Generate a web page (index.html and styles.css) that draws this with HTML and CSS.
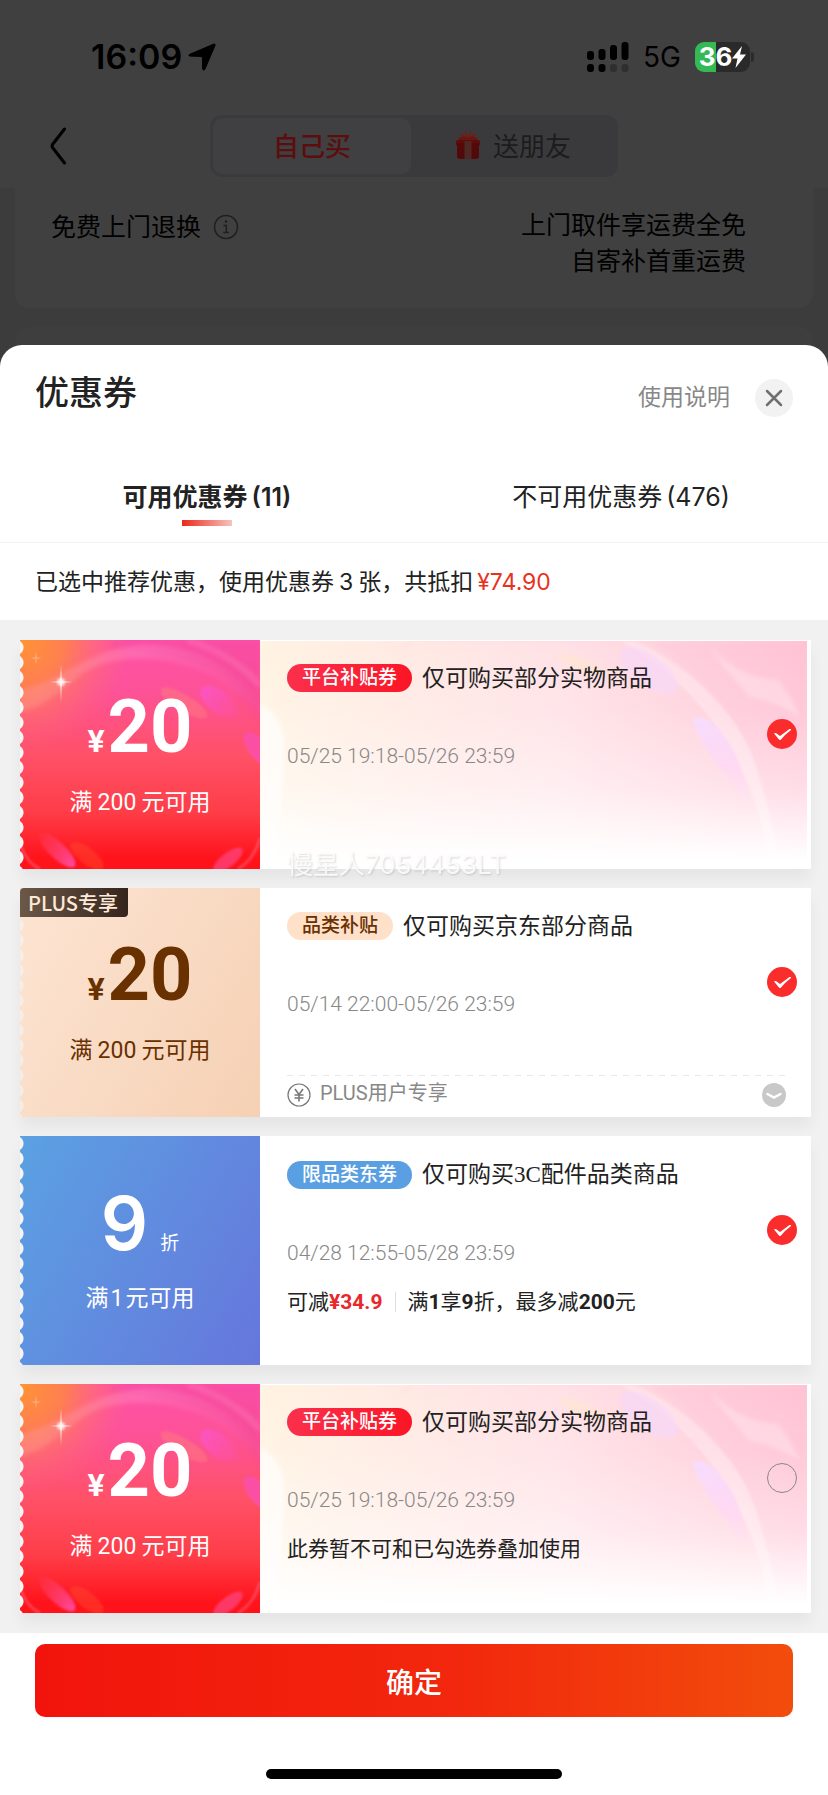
FILE: index.html
```html
<!DOCTYPE html>
<html lang="zh-CN">
<head>
<meta charset="utf-8">
<meta name="viewport" content="width=device-width, initial-scale=1">
<title>优惠券</title>
<link rel="stylesheet" href="styles.css">
</head>
<body>
<svg class="defs" aria-hidden="true">
  <defs>
    <linearGradient id="stub-base" x1="0" y1="0" x2="0" y2="1">
      <stop offset="0" stop-color="#ff52a8"/><stop offset=".22" stop-color="#fd5298"/><stop offset=".5" stop-color="#ff5168"/><stop offset=".75" stop-color="#fe3d48"/><stop offset=".95" stop-color="#ff141c"/><stop offset="1" stop-color="#ff1219"/>
    </linearGradient>
    <radialGradient id="stub-sun" gradientUnits="userSpaceOnUse" cx="0" cy="0" r="110">
      <stop offset="0" stop-color="#ff9433"/><stop offset=".4" stop-color="#ff8547" stop-opacity=".9"/><stop offset="1" stop-color="#ff6c78" stop-opacity="0"/>
    </radialGradient>
    <linearGradient id="petal" x1="0" y1="0" x2="1" y2="0">
      <stop offset="0" stop-color="#fb55c4"/><stop offset="1" stop-color="#ff4f9c" stop-opacity=".5"/>
    </linearGradient>
    <linearGradient id="petal-low" x1="0" y1="0" x2="1" y2="0">
      <stop offset="0" stop-color="#ff4f80" stop-opacity=".1"/><stop offset="1" stop-color="#ff4aa0"/>
    </linearGradient>
    <linearGradient id="ring" x1="0" y1="0" x2="1" y2="0">
      <stop offset="0" stop-color="#ffa88c" stop-opacity=".35"/><stop offset=".5" stop-color="#ff86c0" stop-opacity=".45"/><stop offset="1" stop-color="#ff6cb4" stop-opacity=".1"/>
    </linearGradient>
    <linearGradient id="body-base" x1="0" y1="0" x2="1" y2="0">
      <stop offset="0" stop-color="#fff3e2"/><stop offset=".22" stop-color="#ffebe3"/><stop offset=".55" stop-color="#ffe1e6"/><stop offset="1" stop-color="#ffc4d4"/>
    </linearGradient>
    <linearGradient id="body-fade" x1="0" y1="0" x2="0" y2="1">
      <stop offset="0" stop-color="#fff" stop-opacity="0"/><stop offset=".3" stop-color="#fff" stop-opacity=".12"/><stop offset=".65" stop-color="#fff" stop-opacity=".45"/><stop offset=".96" stop-color="#fff"/>
    </linearGradient>
    <linearGradient id="body-petal" x1="0" y1="0" x2="0" y2="1">
      <stop offset="0" stop-color="#f5d6ff"/><stop offset=".6" stop-color="#ffc4ea"/><stop offset="1" stop-color="#ffc9e6" stop-opacity=".3"/>
    </linearGradient>
    <filter id="soft" x="-20%" y="-20%" width="140%" height="140%"><feGaussianBlur stdDeviation="2"/></filter>
    <filter id="edge" x="-20%" y="-20%" width="140%" height="140%"><feGaussianBlur stdDeviation="1"/></filter>
  </defs>
  <symbol id="stub-art" viewBox="0 0 240 229" preserveAspectRatio="none">
    <rect width="240" height="229" fill="url(#stub-base)"/>
    <path d="M90 0H240V85C220 35 175 12 90 12Z" fill="#e8409c" opacity=".25" filter="url(#soft)"/>
    <rect width="240" height="229" fill="url(#stub-sun)"/>
    <path d="M0 72C28 66 42 48 62 34C92 14 140 14 180 30C208 42 228 58 240 76V64C214 26 170 2 120 5C70 8 44 40 0 50Z" fill="url(#ring)" filter="url(#soft)"/>
    <path d="M168 0C204 12 228 30 240 46" fill="none" stroke="#ff83bd" stroke-width="6" opacity=".35" filter="url(#soft)"/>
    <ellipse cx="164" cy="63" rx="27" ry="8" transform="rotate(31 164 63)" fill="#ff7b80" opacity=".5" filter="url(#edge)"/>
    <ellipse cx="199" cy="62" rx="22" ry="11" transform="rotate(38 199 62)" fill="url(#petal)" filter="url(#edge)"/>
    <ellipse cx="237" cy="108" rx="19" ry="9" transform="rotate(55 237 108)" fill="#fb4fae" opacity=".85" filter="url(#edge)"/>
    <ellipse cx="37" cy="210" rx="24" ry="8" transform="rotate(43 37 210)" fill="url(#petal-low)" filter="url(#edge)"/>
    <ellipse cx="67" cy="216" rx="20" ry="8" transform="rotate(38 67 216)" fill="#ff5a35" opacity=".35" filter="url(#edge)"/>
    <ellipse cx="208" cy="220" rx="18" ry="7" transform="rotate(-38 208 220)" fill="#ff4b8c" opacity=".65" filter="url(#edge)"/>
    <path d="M0 205Q8 224 20 229M240 198Q234 220 218 229" fill="none" stroke="#ff718c" stroke-width="3" opacity=".45" filter="url(#edge)"/>
    <path d="M41 24L42 41L53 42L42 43L41 62L40 43L30 42L40 41Z" fill="#ffe6d8" opacity=".8"/>
    <circle cx="41" cy="42" r="4" fill="#fff" opacity=".75" filter="url(#edge)"/>
    <path d="M16 11L17 17L22 18L17 19L16 25L15 19L10 18L15 17Z" fill="#ffc59c" opacity=".5"/>
  </symbol>
  <symbol id="body-art" viewBox="0 0 547 229" preserveAspectRatio="none">
    <rect width="547" height="229" fill="url(#body-base)"/>
    <path d="M125 22C150 0 180 -20 270 -8H370C440 20 500 100 520 229H547V0H150Z" fill="#ffbcd6" opacity=".25" filter="url(#soft)"/>
    <path d="M445 0C470 30 500 40 516 38Q530 52 540 76Q515 60 490 56Q466 30 445 0Z" fill="#fff" opacity=".25" filter="url(#soft)"/>
    <path d="M375 0C438 30 478 76 494 120C502 145 514 185 520 229H510C504 170 470 60 360 0Z" fill="#ffeaf1" opacity=".5" filter="url(#edge)"/>
    <path d="M296 12C320 14 342 24 350 34C326 36 306 26 296 12Z" fill="#ffe8c4" opacity=".45" filter="url(#soft)"/>
    <ellipse cx="389" cy="30" rx="34" ry="15" transform="rotate(36 389 30)" fill="#f7d6fb" opacity=".65" filter="url(#edge)"/>
    <path d="M433 79C441 70 464 88 476 116C484 136 492 158 486 164C474 146 436 100 433 79Z" fill="url(#body-petal)" filter="url(#edge)"/>
    <path d="M0 64C18 68 27 92 24 118L16 229H0Z" fill="#fff" opacity=".65" filter="url(#soft)"/>
    <rect width="547" height="229" fill="url(#body-fade)"/>
  </symbol>
  <symbol id="tick" viewBox="0 0 30 30">
    <path d="M7 14.500Q8.500 13.500 10 14.800L13 17L22.500 10Q24.500 9.500 24 11Q18 15.500 14 20.500Q13 21.500 12 20.500Q9.500 17.500 7 14.500Z" fill="#fff"/>
  </symbol>
</svg>

<div class="screen">
  <div class="backdrop">
    <header class="status">
      <div class="status-time">
        <span>16:09</span>
        <svg width="28" height="28" viewBox="0 0 28 28"><path d="M25.500 1.200Q27.500 .2 27 2.500L17 26Q15.600 28.500 14.500 25.800V15Q14.500 13.500 13 13.400L2 13.100Q-.5 12.500 2 11.200Z" stroke="#000" stroke-linejoin="round"/></svg>
      </div>
      <div class="status-right">
        <svg width="42" height="30" viewBox="0 0 42 30">
          <rect x="0" y="9" width="7" height="9" rx="3"/><rect x="11.500" y="7" width="7" height="11" rx="3"/><rect x="23" y="3" width="7" height="15" rx="3"/><rect x="34.500" y="0" width="7" height="18" rx="3"/>
          <rect x="0" y="22" width="7" height="8" rx="3"/><rect x="11.500" y="22" width="7" height="8" rx="3"/><rect x="23" y="22" width="7" height="8" rx="3" fill="#2f2f2f"/><rect x="34.500" y="22" width="7" height="8" rx="3" fill="#2f2f2f"/>
        </svg>
        <span class="network">5G</span>
        <div class="battery">
          <span class="battery-level">36<svg width="14" height="22" viewBox="0 0 14 22"><path d="M10 0L0 12.500H5.500L3.500 22L14 8.500H8Z" fill="#fff"/></svg></span>
          <i class="battery-nub"></i>
        </div>
      </div>
    </header>
    <nav class="nav">
      <button class="back" aria-label="返回"><svg width="18" height="38" viewBox="0 0 18 38"><path d="M15.500 2L3.500 17.500Q2.500 19 3.500 20.500L15.500 36" fill="none" stroke="#000" stroke-width="3" stroke-linecap="round"/></svg></button>
      <div class="segment">
        <button class="segment-item is-active">自己买</button>
        <button class="segment-item">
          <svg width="26" height="28" viewBox="0 0 26 28"><path d="M13 8L5 3M13 8L10 1M13 8L16 1M13 8L21 3" stroke="#6c2018" stroke-width="2"/><path d="M4 9Q9 5 13 9Q17 5 22 9" fill="none" stroke="#6e1410" stroke-width="3"/><rect x="1" y="9" width="24" height="6" rx="2" fill="#5d0b0b"/><rect x="2" y="12" width="22" height="16" rx="3" fill="#520909"/><path d="M9.500 10H16.500V28H9.500Z" fill="#4f2a25"/></svg>
          送朋友
        </button>
      </div>
    </nav>
    <main class="page">
      <section class="service">
        <div class="service-name">免费上门退换
          <svg width="26" height="26" viewBox="0 0 26 26"><circle cx="13" cy="13" r="11.500" fill="none" stroke="#1f1f1f" stroke-width="1.500"/><circle cx="13" cy="7.500" r="1.300" fill="#1f1f1f"/><path d="M10.500 11.500H13.300V18.500M10.300 18.500H16" fill="none" stroke="#1f1f1f" stroke-width="1.500"/></svg>
        </div>
        <p class="service-text">上门取件享运费全免<br>自寄补首重运费</p>
      </section>
      <section class="service-next"></section>
    </main>
  </div>

  <div class="sheet" role="dialog" aria-labelledby="sheet-title">
    <header class="sheet-head">
      <h1 id="sheet-title">优惠券</h1>
      <div class="sheet-tools">
        <a href="#help">使用说明</a>
        <button class="close" aria-label="关闭"><svg width="18" height="18" viewBox="0 0 18 18"><path d="M2 2L16 16M16 2L2 16" stroke="#707070" stroke-width="2.500" stroke-linecap="round"/></svg></button>
      </div>
    </header>
    <div class="tabs" role="tablist">
      <button class="tab is-active" role="tab" aria-selected="true"><span class="tab-text">可用优惠券<span>(11)</span></span></button>
      <button class="tab" role="tab" aria-selected="false"><span class="tab-text">不可用优惠券<span>(476)</span></span></button>
    </div>
    <p class="summary">已选中推荐优惠，使用优惠券<span class="count">3</span>张，共抵扣<span class="price">¥74.90</span></p>

    <div class="list">
      <article class="coupon promo">
        <div class="stub">
          <svg class="art"><use href="#stub-art"/></svg>
          <div class="amount"><span class="yen">¥</span><b>20</b></div>
          <p class="rule">满<span class="count">200</span>元可用</p>
        </div>
        <div class="body">
          <svg class="art"><use href="#body-art"/></svg>
          <h2><span class="pill">平台补贴券</span>仅可购买部分实物商品</h2>
          <time>05/25 19:18-05/26 23:59</time>
        </div>
        <label class="check"><input type="checkbox" aria-label="选择平台补贴券" checked><svg><use href="#tick"/></svg></label>
        <span class="mark">慢星人7054453LT</span>
      </article>

      <article class="coupon plus">
        <div class="stub">
          <span class="plus-tag">PLUS专享</span>
          <div class="amount"><span class="yen">¥</span><b>20</b></div>
          <p class="rule">满<span class="count">200</span>元可用</p>
        </div>
        <div class="body">
          <h2><span class="pill">品类补贴</span>仅可购买京东部分商品</h2>
          <time>05/14 22:00-05/26 23:59</time>
          <div class="extra">
            <svg width="24" height="24" viewBox="0 0 24 24" fill="none" stroke="#777"><circle cx="12" cy="12" r="11" stroke-width="1.200"/><path d="M8 6L12 11.500L16 6M7.500 12H16.500M7.500 15H16.500M12 11.500V18.500" stroke-width="1.600"/></svg>
            <span>PLUS用户专享</span>
            <button class="expand" aria-label="展开"><svg width="24" height="24" viewBox="0 0 24 24"><circle cx="12" cy="12" r="12" fill="#c8c8c8"/><path d="M5.500 11L12 14.500L18.500 11" fill="none" stroke="#fff" stroke-width="2.500" stroke-linecap="round"/></svg></button>
          </div>
        </div>
        <label class="check"><input type="checkbox" aria-label="选择品类补贴" checked><svg><use href="#tick"/></svg></label>
      </article>

      <article class="coupon category">
        <div class="stub">
          <div class="amount discount"><b>9</b><span class="unit">折</span></div>
          <p class="rule">满<span class="single">1</span>元可用</p>
        </div>
        <div class="body">
          <h2><span class="pill">限品类东券</span><span>仅可购买<span class="serif">3C</span>配件品类商品</span></h2>
          <time>04/28 12:55-05/28 23:59</time>
          <p class="note"><span>可减<b class="saving">¥34.9</b></span><i class="divider"></i><span>满<b>1</b>享<b>9</b>折，最多减<b>200</b>元</span></p>
        </div>
        <label class="check"><input type="checkbox" aria-label="选择限品类东券" checked><svg><use href="#tick"/></svg></label>
      </article>

      <article class="coupon promo">
        <div class="stub">
          <svg class="art"><use href="#stub-art"/></svg>
          <div class="amount"><span class="yen">¥</span><b>20</b></div>
          <p class="rule">满<span class="count">200</span>元可用</p>
        </div>
        <div class="body">
          <svg class="art"><use href="#body-art"/></svg>
          <h2><span class="pill">平台补贴券</span>仅可购买部分实物商品</h2>
          <time>05/25 19:18-05/26 23:59</time>
          <p class="note">此券暂不可和已勾选券叠加使用</p>
        </div>
        <label class="check"><input type="checkbox" aria-label="选择第二张平台补贴券"></label>
      </article>
    </div>

    <footer class="actions">
      <button class="confirm">确定</button>
      <div class="home-bar"></div>
    </footer>
  </div>
</div>
</body>
</html>
```
FILE: styles.css
```css
* { box-sizing: border-box; }
body { margin: 0; background: #3c3c3c; color: #222; font-family: Inter, "Noto Sans CJK SC", sans-serif; }
h1, h2, p { margin: 0; }
button { border: 0; margin: 0; padding: 0; background: none; color: inherit; font: inherit; }
svg { display: block; flex: none; }
.defs { position: absolute; width: 0; height: 0; }
.screen { display: flex; flex-direction: column; min-height: 100vh; }

/* Dimmed page */
.backdrop { color: #000; }
.status { display: flex; justify-content: space-between; align-items: center; height: 112px; padding: 1px 74px 0 91px; background: #404040; }
.status-time { display: flex; align-items: center; gap: 6px; font-size: 34px; font-weight: 600; line-height: 40px; }
.status-right { display: flex; align-items: center; gap: 14px; }
.network { font-size: 28px; line-height: 32px; }
.battery { display: flex; align-items: center; gap: 1px; }
.battery-level { display: flex; align-items: center; justify-content: center; width: 55px; height: 30px; border-radius: 9px; background: linear-gradient(90deg, #34b955 21px, #2a2a2a 21px); color: #fff; font-size: 26px; font-weight: 700; line-height: 30px; }
.battery-nub { width: 3px; height: 10px; border-radius: 0 3px 3px 0; background: #2a2a2a; }
.nav { display: grid; grid-template-columns: 1fr 408px 1fr; align-items: center; height: 76px; padding-bottom: 8px; background: #404040; }
.back { justify-self: start; margin-left: 49px; }
.segment { display: grid; grid-template-columns: 198px 1fr; height: 62px; padding: 3px; border-radius: 12px; background: #3a3a3d; }
.segment-item { display: flex; align-items: center; justify-content: center; gap: 12px; padding-bottom: 3px; color: #1c1c1c; font-size: 26px; border-radius: 10px; }
.segment-item.is-active { background: #404042; color: #5c0d0d; font-weight: 500; }
.page { padding: 0 15px; }
.service { display: flex; justify-content: space-between; min-height: 120px; padding: 19px 67px 0 36px; border-radius: 0 0 14px 14px; background: #404040; font-size: 25px; line-height: 36px; }
.service-name { display: flex; align-items: center; gap: 12px; height: 40px; font-size: 25px; }
.service-text { text-align: right; }
.service-next { height: 37px; margin-top: 19px; margin-bottom: -19px; border-radius: 14px 14px 0 0; background: #3e3e3e; }

/* Sheet */
.sheet { position: relative; display: flex; flex-direction: column; flex: 1; border-radius: 22px 22px 0 0; background: #fff; }
.sheet-head { display: flex; justify-content: space-between; padding: 24px 35px 0; }
.sheet-head h1 { font-size: 34px; line-height: 48px; font-weight: 500; }
.sheet-tools { display: flex; align-items: center; gap: 25px; height: 57px; }
.sheet-tools a { color: #888; font-size: 23px; line-height: 34px; padding-bottom: 2px; text-decoration: none; }
.close { display: grid; place-items: center; width: 38px; height: 38px; border-radius: 50%; background: #f2f2f2; }
.tabs { display: grid; grid-template-columns: 1fr 1fr; height: 117px; border-bottom: 1px solid #f2f2f2; }
.tab { display: flex; flex-direction: column; align-items: center; padding-top: 54px; font-size: 25px; line-height: 34px; }
.tab-text { display: flex; gap: 4px; }
.tab.is-active { font-weight: 600; }
.tab.is-active::after { content: ""; width: 50px; height: 6px; margin-top: 6px; background: linear-gradient(90deg, #ea2a18, #f9c2be); }
.summary { padding: 22px 35px 21px; font-size: 23px; line-height: 34px; }
.count { margin: 0 5px; }
.single { margin: 0 2px; }
.price { margin-left: 4px; color: #e8321e; }

/* Coupons */
.list { display: flex; flex-direction: column; gap: 19px; padding: 20px 17px 20px 20px; background: #f1f1f1; }
.coupon { position: relative; display: grid; grid-template-columns: 240px 1fr; min-height: 229px; background: linear-gradient(90deg, transparent 40px, #fff 40px); box-shadow: 0 10px 14px #0000000d; }
.stub { position: relative; display: flex; flex-direction: column; align-items: center; padding-top: 46px; color: #fff; }
.stub::before { content: ""; position: absolute; z-index: 1; inset: 0 auto 0 0; width: 5px; background: radial-gradient(circle at -4px 50%, #f5f5f5 7px, transparent 8px) 0 0 / 5px 15px; }
.art { position: absolute; inset: 0; width: 100%; height: 100%; }
.amount { position: relative; display: flex; align-items: baseline; justify-content: center; gap: 3px; height: 100px; font-family: Roboto, sans-serif; line-height: 82px; }
.amount b { font-size: 74px; }
.yen { font-size: 32px; font-weight: 700; }
.discount { gap: 12px; font-family: Inter, sans-serif; }
.discount b { font-weight: 600; }
.unit { font-family: "Noto Sans CJK SC", sans-serif; font-size: 19px; line-height: 24px; }
.rule { position: relative; font-family: Roboto, "Noto Sans CJK SC", sans-serif; font-size: 23px; line-height: 34px; }
.body { position: relative; padding: 21px 0 0 27px; }
.body .art { top: 1px; width: calc(100% - 4px); height: calc(100% - 1px); }
.body h2 { position: relative; display: flex; align-items: center; gap: 10px; font-size: 23px; font-weight: 400; line-height: 34px; }
.pill { padding: 0 15px; border-radius: 14px; color: #fff; font-size: 19px; font-weight: 500; line-height: 28px; }
.serif { font-family: "Liberation Serif", serif; }
.body time { position: relative; display: block; margin-top: 44px; color: #888; font-family: Roboto, sans-serif; font-size: 21px; font-weight: 300; line-height: 34px; }
.note { position: relative; display: flex; align-items: center; gap: 12px; margin-top: 15px; font-family: Roboto, "Noto Sans CJK SC", sans-serif; font-size: 21px; line-height: 34px; }
.saving { color: #e8282c; }
.divider { width: 1px; height: 20px; background: #ddd; }
.check { position: absolute; right: 14px; top: 79px; display: grid; width: 30px; height: 30px; }
.check input { grid-area: 1 / 1; appearance: none; width: 30px; height: 30px; margin: 0; border: 1px solid #888; border-radius: 50%; }
.check input:checked { border: 0; background: #fb2c2c; }
.check svg { grid-area: 1 / 1; position: relative; width: 30px; height: 30px; pointer-events: none; }
.mark { position: absolute; z-index: 2; left: 267px; bottom: -14px; color: #ffffffd9; font-size: 26px; line-height: 36px; text-shadow: 1px 1px 2px #00000026; }

.promo .pill { background: linear-gradient(90deg, #fb304c, #fb1526); }
.plus .stub { background: linear-gradient(120deg, #fde5d3, #f5d0b4); color: #693000; }
.plus .stub::before { opacity: .6; }
.plus .pill { background: #ffe1ca; color: #693000; }
.plus-tag { position: absolute; z-index: 2; left: 0; top: 0; padding: 0 10px 0 8px; border-radius: 4px 0 4px 0; background: linear-gradient(90deg, #6c5847, #35251d); color: #ffe9d9; font-family: "Noto Sans CJK SC", sans-serif; font-size: 20px; font-weight: 500; line-height: 29px; }
.extra { display: flex; align-items: center; gap: 9px; height: 39px; margin: 54px 25px 0 0; background: repeating-linear-gradient(90deg, #e8e8e8 0 6px, transparent 6px 12px) top / 100% 1px no-repeat; color: #888; font-family: Roboto, "Noto Sans CJK SC", sans-serif; font-size: 20px; line-height: 30px; }
.extra span { padding-bottom: 3px; }
.expand { margin-left: auto; }
.category .stub { background: linear-gradient(120deg, #5ba1e2, #6676dc); }
.category .pill { background: #5a9fe1; }

/* Footer */
.actions { display: flex; flex-direction: column; flex: 1; align-items: center; padding: 11px 35px 16px; }
.confirm { width: 100%; height: 73px; border-radius: 10px; background: linear-gradient(90deg, #f2140c, #f2270d 55%, #f24d0c); color: #fff; font-size: 28px; font-weight: 500; }
.home-bar { width: 296px; height: 10px; margin-top: auto; border-radius: 5px; background: #000; }
```
